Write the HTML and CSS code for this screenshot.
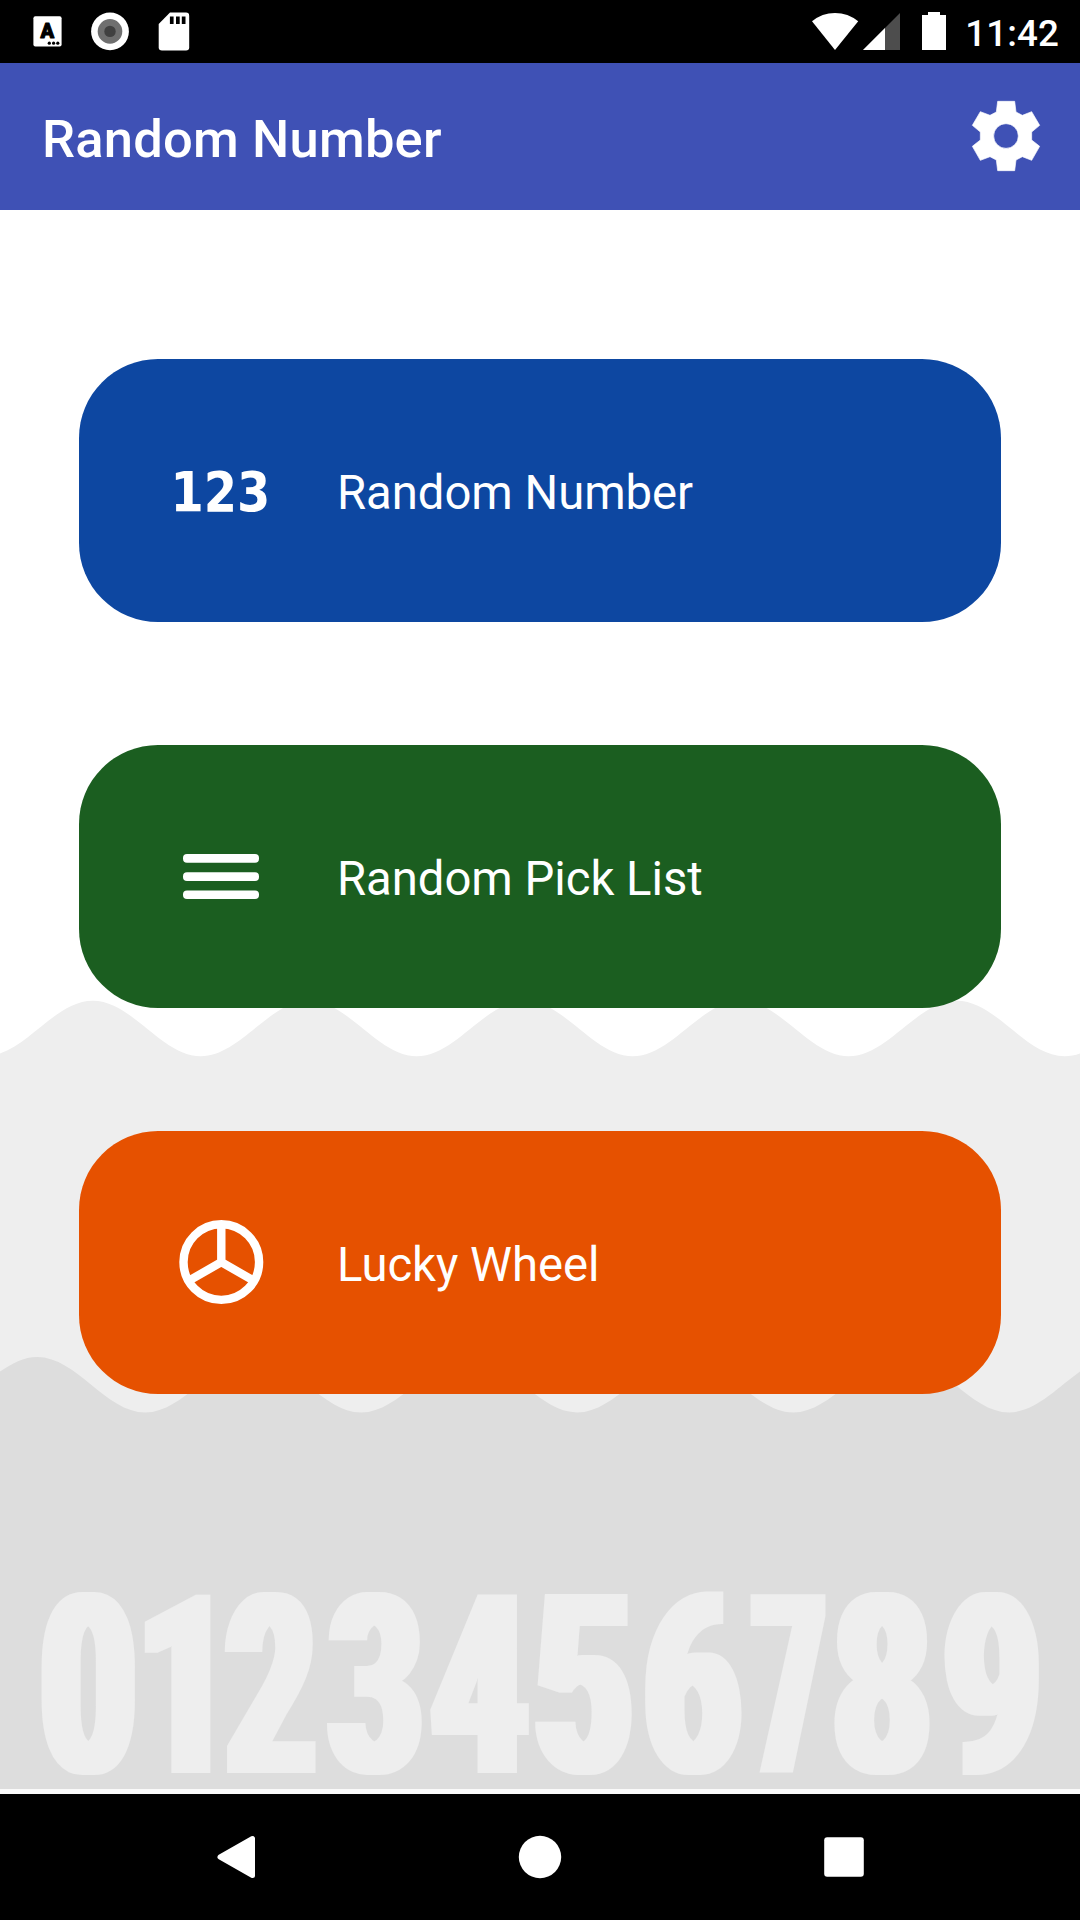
FILE: index.html
```html
<!DOCTYPE html>
<html lang="en">
<head>
<meta charset="utf-8">
<title>Random Number</title>
<link rel="stylesheet" href="styles.css">
</head>
<body>
<div class="screen">
  <div class="status-bar">
    <div class="status-left">
      <svg width="30" height="63" viewBox="33 0 30 63">
        <rect x="33.4" y="16.2" width="28.2" height="30.4" rx="2" fill="#fff"/>
        <text class="badge-letter" x="47.3" y="38">A</text>
        <circle cx="49.3" cy="43.2" r="1.6"/><circle cx="53.6" cy="43.2" r="1.6"/><circle cx="57.8" cy="43.2" r="1.6"/>
      </svg>
      <svg width="38" height="63" viewBox="91.4 0 38 63">
        <circle cx="110.4" cy="31.4" r="18.9" fill="#fff"/>
        <circle cx="110.4" cy="31.4" r="12.3" fill="#6f6f6f"/>
        <circle cx="110.4" cy="31.4" r="5.7" fill="#404040"/>
      </svg>
      <svg width="32" height="63" viewBox="157.5 0 32 63">
        <path d="M169.5 12.5H185.500Q188.700 12.500 188.700 15.700V47.200Q188.700 50.400 185.500 50.400H161.500Q158.200 50.400 158.200 47.200V24Z" fill="#fff"/>
        <path d="M169.400 16.400h3.700V24h-3.700zM175.500 16.400h3.700V24h-3.700zM181.300 16.400h3.700V24h-3.700z"/>
      </svg>
    </div>
    <div class="status-right">
      <svg width="134" height="63" viewBox="812 0 134 63" fill="#fff">
        <path d="M812 21.300Q822 13 835 13T858.200 21.300L835 50Z"/>
        <path d="M900 13V50H863Z" fill="#4d4d4d"/>
        <path d="M885 28V50H863Z"/>
        <path d="M928 12h12v3h6v35h-24V15h6z"/>
      </svg>
      <span class="clock">11:42</span>
    </div>
  </div>

  <header class="app-bar">
    <h1 class="app-title">Random Number</h1>
    <svg class="settings" viewBox="552 282 252 252">
      <path d="M653 304H704L708 336L727 346L755 335L779 376L755 396V420L779 439L755 481L727 470L708 480L704 512H653L649 480L630 470L601 481L577 439L601 420V396L577 376L601 335L630 346L649 336ZM678 371a37 37 0 1 0 0 74a37 37 0 1 0 0-74Z" fill="#fff" fill-rule="evenodd" stroke="#fff" stroke-width="2" stroke-linejoin="round"/>
    </svg>
  </header>

  <main class="content">
    <svg class="backdrop" viewBox="0 0 1080 1579">
      <defs>
        <filter id="widen" x="-5%" y="-5%" width="110%" height="110%"><feMorphology operator="dilate" radius="6 0"/></filter>
      </defs>
      <rect width="1080" height="1579" fill="#fff"/>
      <path fill="#eee" d="M-15.200 846.200C24.100 846.200 53.500 790.700 92.800 790.700s68.700 55.500 108 55.500s68.700 -55.500 108 -55.500s68.700 55.500 108 55.500s68.700 -55.500 108 -55.500s68.700 55.500 108 55.500s68.700 -55.500 108 -55.500s68.700 55.500 108 55.500s68.700 -55.500 108 -55.500s68.700 55.500 108 55.500s68.700 -55.500 108 -55.500V1579H-16Z"/>
      <path fill="#ddd" d="M-70.800 1202.400C-31.500 1202.400 -2.100 1146.900 37.200 1146.900s68.700 55.500 108 55.500s68.700 -55.500 108 -55.500s68.700 55.500 108 55.500s68.700 -55.500 108 -55.500s68.700 55.500 108 55.500s68.700 -55.500 108 -55.500s68.700 55.500 108 55.500s68.700 -55.500 108 -55.500s68.700 55.500 108 55.500s68.700 -55.500 108 -55.500V1579H-71Z"/>
      <g class="digits" filter="url(#widen)">
        <text transform="translate(88.300 1563) scale(.656 1)">0</text>
        <text transform="translate(185 1563) scale(.655 1)">1</text>
        <text transform="translate(271 1563) scale(.617 1)">2</text>
        <text transform="translate(375.500 1563) scale(.64 1)">3</text>
        <text transform="translate(479.500 1563) scale(.664 1)">4</text>
        <text transform="translate(583.700 1563) scale(.68 1)">5</text>
        <text transform="translate(692.300 1563) scale(.66 1)">6</text>
        <text transform="translate(789 1563) scale(.49 1)">7</text>
        <text transform="translate(882 1563) scale(.67 1)">8</text>
        <text transform="translate(992 1563) scale(.664 1)">9</text>
      </g>
    </svg>

    <nav class="menu">
      <a class="card card-number">
        <svg class="card-icon" viewBox="0 0 105 105">
          <text class="icon-digits" transform="translate(1.500 72.700) scale(.855 1)">123</text>
        </svg>
        <span class="card-label">Random Number</span>
      </a>
      <a class="card card-list">
        <svg class="card-icon" viewBox="0 0 105 105" fill="#fff">
          <rect x="14" y="30" width="76" height="8.700" rx="4"/>
          <rect x="14" y="48.200" width="76" height="8.700" rx="4"/>
          <rect x="14" y="66.400" width="76" height="8.700" rx="4"/>
        </svg>
        <span class="card-label">Random Pick List</span>
      </a>
      <a class="card card-wheel">
        <svg class="card-icon" viewBox="0 0 105 105" fill="none" stroke="#fff" stroke-width="8.400">
          <circle cx="52.300" cy="52.100" r="37.800"/>
          <path d="M52.300 15V52.100M20 70.700L52.300 52.100L84.600 70.700"/>
        </svg>
        <span class="card-label">Lucky Wheel</span>
      </a>
    </nav>
  </main>

  <div class="nav-bar">
    <svg width="48" height="48" viewBox="0 0 48 48"><path d="M40.500 5.500V42.500L8 24Z" fill="#fff" stroke="#fff" stroke-width="5" stroke-linejoin="round"/></svg>
    <svg width="48" height="48" viewBox="0 0 48 48"><circle cx="24" cy="24" r="21.200" fill="#fff"/></svg>
    <svg width="48" height="48" viewBox="0 0 48 48"><rect x="4.200" y="4.200" width="39.600" height="39.600" rx="3" fill="#fff"/></svg>
  </div>
</div>
</body>
</html>
```
FILE: styles.css
```css
* { box-sizing: border-box; }
body { margin: 0; font-family: Roboto, sans-serif; color: #fff; }
svg { display: block; flex: none; }

.screen {
  display: flex;
  flex-direction: column;
  width: 1080px;
  height: 1920px;
  overflow: hidden;
  background: #fafafa;
}

.status-bar {
  display: flex;
  justify-content: space-between;
  flex: none;
  height: 63px;
  padding: 0 21px 0 33px;
  background: #000;
}
.status-left { display: flex; gap: 28.400px; }
.status-right { display: flex; align-items: center; gap: 19px; }
.clock { font-size: 36.750px; font-weight: 500; line-height: 44px; padding-top: 4px; letter-spacing: .1px; }
.badge-letter {
  font-size: 20px;
  font-weight: 900;
  text-anchor: middle;
  fill: #000;
  stroke: #000;
  stroke-width: 1;
  stroke-linejoin: round;
}

.app-bar {
  display: flex;
  align-items: center;
  justify-content: space-between;
  flex: none;
  height: 147px;
  padding: 0 32px 0 42px;
  background: #3f51b5;
}
.app-title {
  margin: 0;
  padding-top: 4px;
  font-size: 52.500px;
  font-weight: 500;
  line-height: 62px;
  letter-spacing: .2px;
}
.settings { width: 84px; height: 84px; margin-bottom: 2px; }

.content { position: relative; flex: 1; }
.backdrop { position: absolute; top: 0; left: 0; width: 1080px; height: 1579px; overflow: visible; }
.digits {
  font-size: 250px;
  font-weight: 900;
  text-anchor: middle;
  fill: #eee;
}

.menu {
  position: relative;
  display: flex;
  flex-direction: column;
  gap: 123px;
  padding: 149px 79px 0;
}
.card {
  display: flex;
  align-items: center;
  gap: 63px;
  height: 263px;
  padding-left: 90px;
  border-radius: 79px;
}
.card-number { background: #0d47a1; }
.card-list { background: #1b5e20; }
.card-wheel { background: #e65100; }
.card-icon { width: 105px; height: 105px; }
.card-label { padding-top: 5px; font-size: 47.250px; line-height: 56px; letter-spacing: -.03px; }
.icon-digits {
  font-family: "DejaVu Sans", sans-serif;
  font-size: 56px;
  font-weight: 700;
  fill: #fff;
}

.nav-bar {
  position: relative;
  display: grid;
  grid-template-columns: repeat(3, 304px);
  justify-content: center;
  align-items: center;
  justify-items: center;
  flex: none;
  height: 126px;
  background: #000;
}
```
